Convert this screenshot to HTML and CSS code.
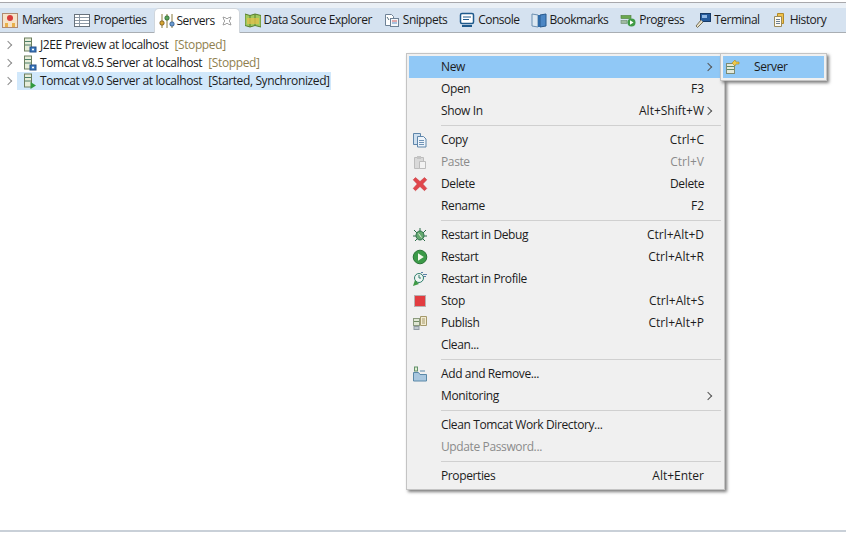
FILE: index.html
```html
<!DOCTYPE html>
<html lang="en">
<head>
<meta charset="utf-8">
<title>Servers</title>
<link rel="stylesheet" href="styles.css">
</head>
<body>
<div class="view">
  <div class="tabbar">
    <div class="tab tab-first"><svg class="ti" viewBox="0 0 16 16"><rect x=".5" y="1.500" width="15" height="14" fill="#f6e3c8" stroke="#b08a70"/><circle cx="8" cy="6" r="3" fill="#d83a3a"/><path d="M3 15V11h3v4zM10 15V11h3v4z" fill="#e9b04a"/></svg><span>Markers</span></div>
    <div class="tab tab-loose"><svg class="ti" viewBox="0 0 16 16"><rect x=".5" y="2.500" width="15" height="12" fill="#fff" stroke="#68727c"/><path d="M1 5.500h14M1 8.500h14M1 11.500h14M5.500 3v11" stroke="#8d99a5" fill="none"/></svg><span>Properties</span></div>
    <div class="tab active"><svg class="ti" viewBox="0 0 16 16"><path d="M3 1v14M8 1v14M13 1v14" stroke="#8a7a3a" fill="none"/><rect x="1" y="8" width="4" height="4" rx="1.500" fill="#d9a531" stroke="#80611c"/><rect x="6" y="3" width="4" height="4" rx="1.500" fill="#58a35b" stroke="#2f6d33"/><rect x="11" y="9" width="4" height="4" rx="1.500" fill="#6c9bd0" stroke="#345f92"/></svg><span>Servers</span><svg class="close" viewBox="0 0 10 10"><path d="M1 1l3 1 1 1 1-1 3-1-1 3-1 1 1 1 1 3-3-1-1-1-1 1-3 1 1-3 1-1-1-1z" fill="#fff" stroke="#8c8c8c" stroke-width=".8"/></svg></div>
    <div class="tab"><svg class="ti" viewBox="0 0 16 16"><path d="M0 2l5 1.500 5-1.500 6 1.500V15l-6-1.500L5 15l-5-1.500z" fill="#9fc95f" stroke="#587f2f"/><path d="M5 3.500V15M10 2v11.500" stroke="#587f2f" fill="none"/><path d="M2 6h12v6H2z" fill="#e3bf4c" opacity=".75"/></svg><span>Data Source Explorer</span></div>
    <div class="tab tab-loose"><svg class="ti" viewBox="0 0 16 16"><path d="M1.500 2.500h6l2 2v9h-8z" fill="#fff" stroke="#6e8296"/><rect x="6.500" y="6.500" width="8" height="8" fill="#f4f7fa" stroke="#6e8296"/><path d="M8 9h5" stroke="#cf5b5b"/><path d="M8 11h5" stroke="#5a8cc0"/><path d="M3 5l2 3" stroke="#55707f"/></svg><span>Snippets</span></div>
    <div class="tab tab-loose"><svg class="ti" viewBox="0 0 16 16"><rect x="1.500" y="1.500" width="13" height="10" rx="1.500" fill="#fff" stroke="#1f5a8c" stroke-width="1.500"/><path d="M4 5h8M4 7.500h6" stroke="#1f5a8c"/><path d="M3 14h10" stroke="#1f5a8c" stroke-width="2"/></svg><span>Console</span></div>
    <div class="tab"><svg class="ti" viewBox="0 0 16 16"><path d="M1 2l6 1v12l-6-1z" fill="#dce8f2" stroke="#6b8fb0"/><path d="M9 3l6-1v12l-6 1z" fill="#4b86c4" stroke="#27598d"/><path d="M7 3h2v12H7z" fill="#2f6ba8"/></svg><span>Bookmarks</span></div>
    <div class="tab tab-loose"><svg class="ti" viewBox="0 0 16 16"><rect x="1" y="3.500" width="10" height="3" fill="#6aa84f" stroke="#4c7d38" stroke-width=".6"/><rect x="1" y="8.500" width="6" height="3" fill="#9fb9a0" stroke="#6c8a6c" stroke-width=".6"/><circle cx="11.500" cy="10.500" r="4" fill="#3f9a45"/><path d="M10 8.300v4.400l3.500-2.200z" fill="#fff"/></svg><span>Progress</span></div>
    <div class="tab"><svg class="ti" viewBox="0 0 16 16"><rect x="5.500" y="1.500" width="10" height="8" fill="#245a9c" stroke="#173a66"/><rect x="7" y="3" width="5" height="3" fill="#8fb8e6"/><path d="M6 8L1 14l1.500 1.500L8 10" fill="#e7e0c8" stroke="#77705a"/></svg><span>Terminal</span></div>
    <div class="tab"><svg class="ti" viewBox="0 0 16 16"><path d="M6.500 1.500h6v10h-6z" fill="#f0c14b" stroke="#b08a2c"/><path d="M3.500 4.500h7v10h-7z" fill="#fdfaf0" stroke="#9a8a5a"/><path d="M5 7.500h4M5 9.500h4M5 11.500h4" stroke="#6d7f92"/></svg><span>History</span></div>
  </div>
  <div class="tree">
    <div class="row"><span class="chev"></span><span class="cell"><svg class="si" viewBox="0 0 16 16"><rect x="1.500" y="1" width="7" height="13" fill="#e7edd9" stroke="#6c7f5e"/><path d="M2 4.500h6M2 8h6" stroke="#4d7f6a" fill="none"/><rect x="7" y="10" width="6" height="5" fill="#3a77bd" stroke="#24518a"/><rect x="9" y="11.700" width="2" height="1.600" fill="#fff"/></svg><span class="label">J2EE Preview at localhost</span><span class="state">[Stopped]</span></span></div>
    <div class="row"><span class="chev"></span><span class="cell"><svg class="si" viewBox="0 0 16 16"><rect x="1.500" y="1" width="7" height="13" fill="#e7edd9" stroke="#6c7f5e"/><path d="M2 4.500h6M2 8h6" stroke="#4d7f6a" fill="none"/><rect x="7" y="10" width="6" height="5" fill="#3a77bd" stroke="#24518a"/><rect x="9" y="11.700" width="2" height="1.600" fill="#fff"/></svg><span class="label">Tomcat v8.5 Server at localhost</span><span class="state">[Stopped]</span></span></div>
    <div class="row"><span class="chev"></span><span class="cell sel"><svg class="si" viewBox="0 0 16 16"><rect x="1.500" y="1" width="7" height="13" fill="#e7edd9" stroke="#6c7f5e"/><path d="M2 4.500h6M2 8h6" stroke="#4d7f6a" fill="none"/><path d="M7.500 9v7l5.500-3.500z" fill="#2f9a3e"/></svg><span class="label">Tomcat v9.0 Server at localhost</span><span class="state-on">[Started, Synchronized]</span></span></div>
  </div>
  <div class="foot"></div>
</div>

<div class="menu">
  <div class="item hot"><span class="mi"></span><span class="txt">New</span><span class="arrow"></span></div>
  <div class="item"><span class="mi"></span><span class="txt">Open</span><span class="key">F3</span></div>
  <div class="item"><span class="mi"></span><span class="txt">Show In</span><span class="key">Alt+Shift+W</span><span class="arrow"></span></div>
  <div class="sep"></div>
  <div class="item"><span class="mi"><svg viewBox="0 0 16 16"><path d="M1.500 1.500h7v11h-7z" fill="#cfe0ef" stroke="#5f86ab"/><path d="M5.500 4.500h6l2.500 2.500v8h-8.500z" fill="#eef4fa" stroke="#5f86ab"/><path d="M7 8.500h5M7 10.500h5M7 12.500h5" stroke="#6f93b6"/></svg></span><span class="txt">Copy</span><span class="key">Ctrl+C</span></div>
  <div class="item off"><span class="mi"><svg viewBox="0 0 16 16"><path d="M2.500 3.500h9v11h-9z" fill="#d9d9d9" stroke="#bcbcbc"/><path d="M5 2h4v3H5z" fill="#c4c4c4"/><path d="M7.500 7.500h6v7h-6z" fill="#f2f2f2" stroke="#bcbcbc"/></svg></span><span class="txt">Paste</span><span class="key">Ctrl+V</span></div>
  <div class="item"><span class="mi"><svg viewBox="0 0 16 16"><path d="M3.500 1.500L8 5.500l4.500-4 2.300 2.300L10.800 8l4 4.400-2.300 2.300L8 10.500l-4.500 4.200-2.300-2.300L5.200 8l-4-4.200z" fill="#e0474c" stroke="#c23338" stroke-width=".5"/></svg></span><span class="txt">Delete</span><span class="key key-word">Delete</span></div>
  <div class="item"><span class="mi"></span><span class="txt">Rename</span><span class="key">F2</span></div>
  <div class="sep"></div>
  <div class="item"><span class="mi"><svg viewBox="0 0 16 16"><path d="M2 3l3 3M14 3l-3 3M1 9h3M12 9h3M3 14l2.500-2.500M13 14l-2.500-2.500M8 1v3" stroke="#2c6e49" fill="none"/><ellipse cx="8" cy="8.500" rx="4" ry="4.500" fill="#63a86e" stroke="#2c6e49"/><path d="M6.500 6.500l3 4" stroke="#e7f2e0"/></svg></span><span class="txt">Restart in Debug</span><span class="key">Ctrl+Alt+D</span></div>
  <div class="item"><span class="mi"><svg viewBox="0 0 16 16"><circle cx="8" cy="8" r="6.800" fill="#3b9a48" stroke="#2a7436"/><path d="M6 4.300v7.400L11.800 8z" fill="#f3f8ea"/></svg></span><span class="txt">Restart</span><span class="key">Ctrl+Alt+R</span></div>
  <div class="item"><span class="mi"><svg viewBox="0 0 16 16"><path d="M9 1.500h2M11 3.500h4M11 5.500h3" stroke="#5b82a8" fill="none"/><circle cx="7" cy="7" r="4.500" fill="#eef5f2" stroke="#2e7d6b"/><path d="M1 15l2-6 4 4z" fill="#3f9a45"/><path d="M7 4v3h2" stroke="#2e7d6b" fill="none"/></svg></span><span class="txt">Restart in Profile</span></div>
  <div class="item"><span class="mi"><svg viewBox="0 0 16 16"><rect x="2.500" y="2.500" width="11" height="11" fill="#e23c40" stroke="#b8b0b0"/></svg></span><span class="txt">Stop</span><span class="key">Ctrl+Alt+S</span></div>
  <div class="item"><span class="mi"><svg viewBox="0 0 16 16"><rect x="1.500" y="3.500" width="6" height="7" fill="#dfe6d3" stroke="#8b9a7d"/><path d="M2 6.500h5" stroke="#6f8a63"/><rect x="2" y="11.500" width="5" height="3" fill="#bfc8ce" stroke="#8f9aa2"/><path d="M8.500 1.500h6v9h-6z" fill="#f3ecd2" stroke="#a69a6c"/><path d="M10 4h3M10 6h3M10 8h3" stroke="#a69a6c"/></svg></span><span class="txt">Publish</span><span class="key">Ctrl+Alt+P</span></div>
  <div class="item"><span class="mi"></span><span class="txt">Clean...</span></div>
  <div class="sep"></div>
  <div class="item"><span class="mi"><svg viewBox="0 0 16 16"><path d="M1.500 6.500h5l1.500 2h6.500v6.500h-13z" fill="#a9c7df" stroke="#5a88a8"/><rect x="2.500" y="1" width="3" height="4" fill="#dfeed0" stroke="#62906b"/><path d="M8 5h5" stroke="#5a88a8"/></svg></span><span class="txt">Add and Remove...</span></div>
  <div class="item"><span class="mi"></span><span class="txt">Monitoring</span><span class="arrow"></span></div>
  <div class="sep"></div>
  <div class="item"><span class="mi"></span><span class="txt">Clean Tomcat Work Directory...</span></div>
  <div class="item off"><span class="mi"></span><span class="txt">Update Password...</span></div>
  <div class="sep"></div>
  <div class="item"><span class="mi"></span><span class="txt">Properties</span><span class="key">Alt+Enter</span></div>
</div>

<div class="submenu">
  <div class="item hot"><span class="mi sub-mi"><svg viewBox="0 0 16 16"><rect x="2.500" y="4.500" width="8" height="10" fill="#e4e9da" stroke="#7d8a72"/><path d="M3 7.500h7M3 10.500h7" stroke="#5e8a6a"/><path d="M8 4l3-3 1 2h3v2h-3l-1 2z" fill="#f0c94a" stroke="#a88a22" stroke-width=".6"/></svg></span><span class="txt">Server</span></div>
</div>
</body>
</html>
```
FILE: styles.css
```css
* { box-sizing: border-box; }
html, body { margin: 0; padding: 0; }
body {
  width: 846px;
  height: 534px;
  overflow: hidden;
  background: #fff;
  font: 12px/16px "Open Sans", "Noto Sans", sans-serif;
  color: #1c1c1c;
  letter-spacing: -0.38px;
}
svg { display: block; }

.view {
  height: 534px;
  display: flex;
  flex-direction: column;
  padding-top: 2px;
}
.tabbar {
  height: 31px;
  flex: none;
  display: flex;
  align-items: flex-end;
  background: linear-gradient(#eaf0f6 0 5px, #d5e2f0 5px);
  border-top: 1px solid #a8a8ac;
  border-bottom: 1px solid #a9aeb3;
  padding-left: 2px;
  letter-spacing: -0.5px;
}
.tab {
  height: 24px;
  display: flex;
  align-items: center;
  gap: 3px;
  padding: 0 6px 0 0;
  margin-left: 5px;
  white-space: nowrap;
}
.tab-first {
  margin-left: 0;
  gap: 4px;
  letter-spacing: -0.8px;
}
.tab-loose { margin-left: 6px; }
.ti { width: 16px; height: 16px; flex: none; }
.active {
  height: 25px;
  margin-bottom: -1px;
  margin-left: 1px;
  padding: 0 7px 0 4px;
  gap: 2px;
  background: #fff;
  border: 1px solid #d0d6dc;
  border-bottom: none;
  border-radius: 5px 5px 0 0;
}
.close { width: 10px; height: 10px; margin-left: 5px; }

.tree {
  flex: 1;
  padding: 3px 0 0 5px;
}
.row {
  height: 18px;
  display: flex;
  align-items: center;
  white-space: nowrap;
}
.chev {
  width: 6px;
  height: 6px;
  border-top: 1px solid #8c8c8c;
  border-right: 1px solid #8c8c8c;
  transform: rotate(45deg);
  margin-right: 6px;
  flex: none;
}
.cell {
  height: 18px;
  display: flex;
  align-items: center;
  padding: 0 1px 0 6px;
}
.si { width: 16px; height: 16px; margin-right: 1px; flex: none; }
.state { color: #8f7f4f; margin-left: 6px; }
.state-on { margin-left: 6px; }
.sel { background: #d1e8fb; }
.foot {
  height: 4px;
  flex: none;
  border-top: 2px solid #c9d0d8;
  background: #fff;
}

.menu {
  position: absolute;
  left: 406px;
  top: 53px;
  width: 319px;
  height: 437px;
  padding: 2px;
  background: #f0f0f0;
  border: 1px solid #c4c4c4;
  box-shadow: 2px 2px 3px #7d7d7d;
}
.item {
  height: 22px;
  display: flex;
  align-items: center;
  white-space: nowrap;
  position: relative;
}
.hot { background: #90c8f6; }
.off { color: #8b8b8b; }
.mi {
  width: 32px;
  height: 16px;
  flex: none;
  padding-left: 3px;
}
.mi svg { width: 16px; height: 16px; }
.txt { flex: 1; }
.key { margin-right: 18px; letter-spacing: 0; }
.key-word { letter-spacing: -0.38px; }
.arrow {
  width: 6px;
  height: 6px;
  border-top: 1px solid #555;
  border-right: 1px solid #555;
  transform: rotate(45deg);
  position: absolute;
  right: 11px;
  top: 8px;
}
.sep {
  height: 1px;
  margin: 3px 1px 3px 32px;
  background: #d0d0d0;
}

.submenu {
  position: absolute;
  left: 720px;
  top: 53px;
  width: 107px;
  height: 28px;
  padding: 2px;
  background: #f0f0f0;
  border: 1px solid #c4c4c4;
  box-shadow: 2px 2px 3px #7d7d7d;
}
.sub-mi { padding-left: 1px; width: 31px; }
```
